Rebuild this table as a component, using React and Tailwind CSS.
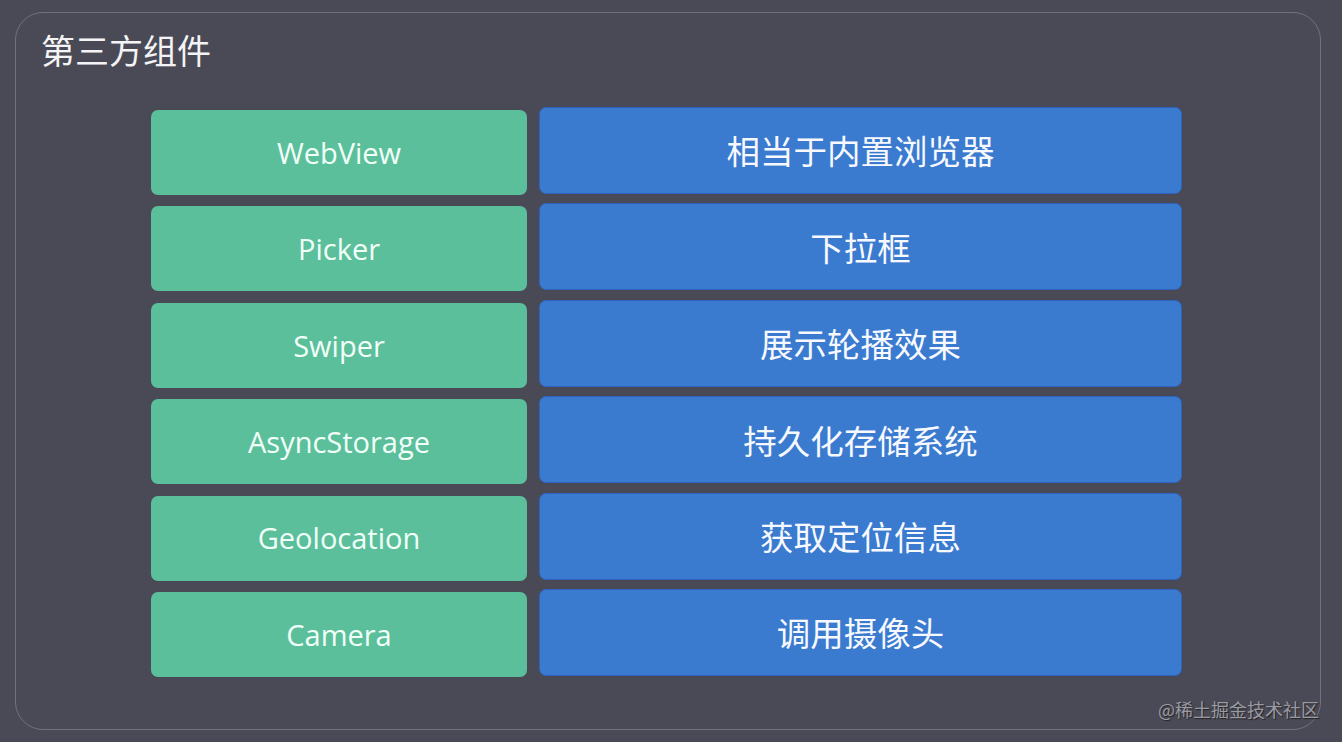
import React from "react";

const rows = [
  ["WebView", "相当于内置浏览器"],
  ["Picker", "下拉框"],
  ["Swiper", "展示轮播效果"],
  ["AsyncStorage", "持久化存储系统"],
  ["Geolocation", "获取定位信息"],
  ["Camera", "调用摄像头"],
];

export default function App() {
  return (
    <div
      className="relative w-[1342px] h-[742px] bg-[#4a4a56] overflow-hidden pt-[12px] pl-[15px]"
      style={{ fontFamily: '"Open Sans", "Noto Sans CJK SC", sans-serif' }}
    >
      <div className="w-[1306px] h-[718px] rounded-[28px] border border-[#72727e] flex flex-col">
        <div
          className="pl-[25px] pt-[16px] text-[34px] leading-[42px] text-[#f4f4f6]"
          style={{ fontFamily: '"Noto Sans CJK SC", sans-serif' }}
        >
          第三方组件
        </div>
        <div className="mt-[36px] ml-[135px] flex flex-col gap-[9.4px]">
          {rows.map(([a, b]) => (
            <div key={a} className="flex items-start gap-[12px] h-[87px]">
              <div className="mt-[3px] w-[376px] h-[85px] rounded-[7px] bg-[#5bbf9b] flex items-center justify-center text-[29px] text-[#f2fff9]">
                {a}
              </div>
              <div
                className="w-[643px] h-[87px] rounded-[7px] bg-[#3a7bcf] border-[1.5px] border-[#2f62bd] flex items-center justify-center text-[33.5px] text-[#f7f9ff]"
                style={{ fontFamily: '"Noto Sans CJK SC", sans-serif' }}
              >
                {b}
              </div>
            </div>
          ))}
        </div>
      </div>
      <div
        className="absolute left-[1158px] top-[696px] text-[18px] leading-[26px] text-[#9a9aa4] [text-shadow:1px_1px_1px_#222]"
        style={{ fontFamily: '"Noto Sans CJK SC", sans-serif' }}
      >
        @稀土掘金技术社区
      </div>
    </div>
  );
}
